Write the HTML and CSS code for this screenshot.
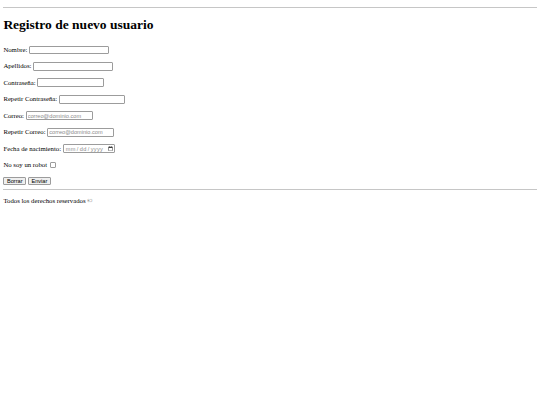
FILE: index.html
```html
<!DOCTYPE html>
<html lang="es">
<head>
<meta charset="utf-8">
<title>Registro de nuevo usuario</title>
<link rel="stylesheet" href="styles.css">
</head>
<body>
<hr class="rule">
<h1 class="title">Registro de nuevo usuario</h1>
<form class="form">
<p class="row"><label for="nombre">Nombre:</label><input id="nombre" class="field field-text" type="text"></p>
<p class="row"><label for="apellidos">Apellidos:</label><input id="apellidos" class="field field-text" type="text"></p>
<p class="row"><label for="pass">Contraseña:</label><input id="pass" class="field field-pass" type="password"></p>
<p class="row"><label for="pass2">Repetir Contraseña:</label><input id="pass2" class="field field-pass" type="password"></p>
<p class="row"><label for="mail">Correo:</label><input id="mail" class="field field-mail" type="email" placeholder="correo@dominio.com"></p>
<p class="row"><label for="mail2">Repetir Correo:</label><input id="mail2" class="field field-mail" type="email" placeholder="correo@dominio.com"></p>
<p class="row"><label for="fecha">Fecha de nacimiento:</label><input id="fecha" class="field field-date" type="date"></p>
<p class="row"><label for="robot">No soy un robot</label><input id="robot" class="check" type="checkbox"></p>
<div class="actions"><input class="btn" type="reset" value="Borrar"><input class="btn" type="submit" value="Enviar"></div>
</form>
<hr class="rule">
<footer class="footer"><p class="footer-text">Todos los derechos reservados ©</p></footer>
</body>
</html>
```

FILE: styles.css
```css
body {
  margin: 3.375px;
  font-family: "Liberation Serif", "Times New Roman", serif;
  font-size: 6.75px;
  color: #000;
  background: #fff;
}
.rule {
  height: 0;
  margin: 3.375px 0;
  border: 0;
  border-top: 1px solid #c6c6c6;
}
.title {
  font-size: 13.5px;
  line-height: 15.5px;
  font-weight: bold;
  margin: 9.05px 0 12.8px;
}
.form {
  margin: 0;
}
.row {
  display: flex;
  align-items: center;
  gap: 1.7px;
  height: 9.7px;
  margin: 6.75px 0;
  font-size: 6.75px;
  line-height: 7.76px;
}
.field {
  box-sizing: border-box;
  height: 8.8px;
  margin: 0;
  padding: 0 1px;
  border: 1px solid #9c9c9c;
  border-radius: 1px;
  background: #fff;
  font-family: "Liberation Sans", Arial, sans-serif;
  font-size: 5.625px;
  color: #000;
}
.field::placeholder {
  color: #8a8a8a;
}
.field-text {
  width: 80px;
}
.field-pass {
  width: 66.5px;
}
.field-mail {
  width: 67px;
}
.field-date {
  width: 52.5px;
  color: #8a8a8a;
  letter-spacing: 0.35px;
}
.field-date::-webkit-calendar-picker-indicator {
  margin: 0;
  padding: 0;
  width: 5px;
  height: 5px;
}
.check {
  appearance: none;
  -webkit-appearance: none;
  box-sizing: border-box;
  width: 5.2px;
  height: 5.2px;
  margin: 0 0 0 1.7px;
  border: 1px solid #9c9c9c;
  border-radius: 1px;
  background: #fff;
}
.actions {
  display: flex;
  align-items: center;
  gap: 1.7px;
  height: 9px;
}
.btn {
  box-sizing: border-box;
  height: 7.5px;
  margin: 0;
  padding: 0 2.6px;
  border: 1px solid #9c9c9c;
  border-radius: 1px;
  background: #efefef;
  font-family: "Liberation Sans", Arial, sans-serif;
  font-size: 5.625px;
  line-height: 5px;
  color: #000;
}
.footer-text {
  margin: 6.75px 0;
  font-size: 6.75px;
  line-height: 7.76px;
}
```
